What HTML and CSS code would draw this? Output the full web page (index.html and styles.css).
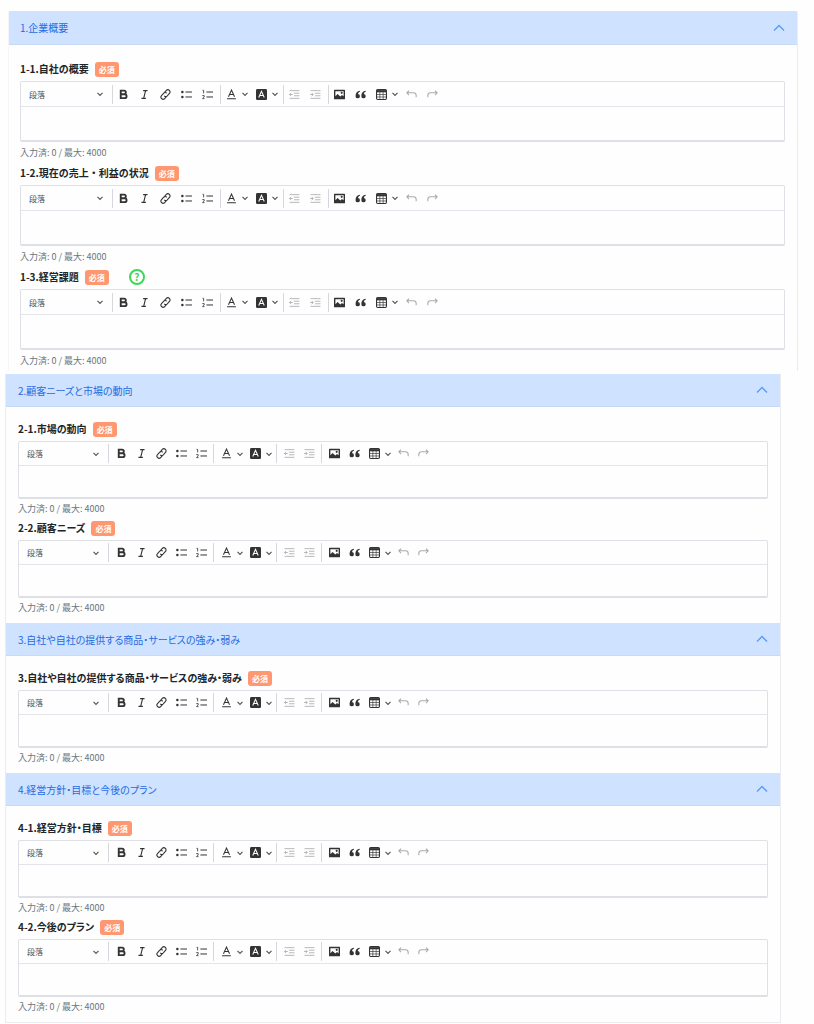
FILE: index.html
```html
<!DOCTYPE html>
<html lang="ja">
<head>
  <meta charset="UTF-8">
  <meta name="viewport" content="width=device-width, initial-scale=1.0">
  <title>事業計画</title>
  <link rel="stylesheet" href="styles.css">
</head>
<body>
  <svg class="sprite" aria-hidden="true">
    <symbol id="i-up" viewBox="0 0 12 12"><path d="M1 8.500l5-5 5 5" fill="none" stroke="currentColor" stroke-width="1.400"/></symbol>
    <symbol id="i-down" viewBox="0 0 6 6"><path d="M.5 1.800L3 4.300l2.500-2.500" fill="none" stroke="currentColor" stroke-width="1.200"/></symbol>
    <symbol id="i-bold" viewBox="0 0 20 20"><path d="M5 3h6a3.200 3.200 0 0 1 0 6.500H5zM5 9.500h7a3.600 3.600 0 0 1 0 7.200H5z" fill="none" stroke="currentColor" stroke-width="3.400"/></symbol>
    <symbol id="i-italic" viewBox="0 0 20 20"><path d="M7.500 3h8M4.500 17h8M12 3L8.500 17" fill="none" stroke="currentColor" stroke-width="2"/></symbol>
    <symbol id="i-link" viewBox="0 0 20 20"><path d="M8 6.500l3.500-3.800a3.900 3.900 0 0 1 5.700 5.400l-4 4.200a3.900 3.900 0 0 1-5.500 0M12 13.500l-3.500 3.800a3.900 3.900 0 0 1-5.700-5.400l4-4.200a3.900 3.900 0 0 1 5.500 0" fill="none" stroke="currentColor" stroke-width="2"/></symbol>
    <symbol id="i-ul" viewBox="0 0 20 20"><path d="M8 5.500h12M8 14.500h12" stroke="currentColor" stroke-width="1.800"/><circle cx="2.500" cy="5.500" r="2.300" fill="currentColor"/><circle cx="2.500" cy="14.500" r="2.300" fill="currentColor"/></symbol>
    <symbol id="i-ol" viewBox="0 0 20 20"><path d="M8 5.500h12M8 14.500h12" stroke="currentColor" stroke-width="1.800"/><path d="M1 2.500h2V8M.5 12H4v2.500L1 17.500h3.500" fill="none" stroke="currentColor" stroke-width="1.500"/></symbol>
    <symbol id="i-color" viewBox="0 0 20 20"><path d="M4.500 14L10 2l5.500 12M6.500 10h7M2 17.800h16" fill="none" stroke="currentColor" stroke-width="1.900"/></symbol>
    <symbol id="i-bg" viewBox="0 0 20 20"><rect width="20" height="20" rx="2.500" fill="currentColor"/><path d="M5 15.500L10 4l5 11.500M7 12h6" fill="none" stroke="#fff" stroke-width="1.900"/></symbol>
    <symbol id="i-outdent" viewBox="0 0 20 20"><path d="M1 3h18M9 7.700h10M9 12.300h10M1 17h18M1 10h6M4 7l-3 3 3 3" fill="none" stroke="currentColor" stroke-width="1.500"/></symbol>
    <symbol id="i-indent" viewBox="0 0 20 20"><path d="M1 3h18M9 7.700h10M9 12.300h10M1 17h18M0 10h6M3 7l3 3-3 3" fill="none" stroke="currentColor" stroke-width="1.500"/></symbol>
    <symbol id="i-image" viewBox="0 0 20 20"><path fill-rule="evenodd" d="M1 1.500h18a1 1 0 0 1 1 1v15a1 1 0 0 1-1 1H1a1 1 0 0 1-1-1v-15a1 1 0 0 1 1-1zM2.500 4v9l4-4 5 4.500 3-2.500 3 2V4z" fill="currentColor"/><circle cx="14" cy="7" r="1.900" fill="currentColor"/></symbol>
    <symbol id="i-quote" viewBox="0 0 20 20"><path d="M9 3C4 3.500 1 7 1 12.500A4 4 0 1 0 5.500 9C5.800 7 7 5.700 9 5zM19.500 3c-5 .5-8 4-8 9.500A4 4 0 1 0 16 9c.3-2 1.500-3.300 3.500-4z" fill="currentColor"/></symbol>
    <symbol id="i-table" viewBox="0 0 20 20"><rect x="1" y="1" width="18" height="18" rx="2" fill="none" stroke="currentColor" stroke-width="2"/><path d="M1 4h18" stroke="currentColor" stroke-width="4"/><path d="M7 5v14M13 5v14M1 10h18M1 14.500h18" stroke="currentColor" stroke-width="1.200"/></symbol>
    <symbol id="i-undo" viewBox="0 0 20 20"><path d="M5.500 3L1.500 7l4 4M1.500 7h12a5 5 0 0 1 5 5v3" fill="none" stroke="currentColor" stroke-width="1.900"/></symbol>
    <symbol id="i-redo" viewBox="0 0 20 20"><path d="M14.500 3l4 4-4 4M18.500 7h-12a5 5 0 0 0-5 5v3" fill="none" stroke="currentColor" stroke-width="1.900"/></symbol>
  </svg>

  <template id="toolbar">
    <div class="toolbar" role="toolbar">
      <span class="style-picker">
        <select class="style-select" aria-label="スタイル"><option>段落</option></select>
        <svg class="caret"><use href="#i-down"/></svg>
      </span>
      <span class="sep"></span>
      <button type="button" class="tool" aria-label="太字"><svg class="icon"><use href="#i-bold"/></svg></button>
      <button type="button" class="tool" aria-label="斜体"><svg class="icon"><use href="#i-italic"/></svg></button>
      <button type="button" class="tool" aria-label="リンク"><svg class="icon"><use href="#i-link"/></svg></button>
      <button type="button" class="tool" aria-label="箇条書き"><svg class="icon"><use href="#i-ul"/></svg></button>
      <button type="button" class="tool" aria-label="番号付きリスト"><svg class="icon"><use href="#i-ol"/></svg></button>
      <span class="sep"></span>
      <button type="button" class="tool drop" aria-label="文字色"><svg class="icon"><use href="#i-color"/></svg><svg class="caret"><use href="#i-down"/></svg></button>
      <button type="button" class="tool drop" aria-label="背景色"><svg class="icon"><use href="#i-bg"/></svg><svg class="caret"><use href="#i-down"/></svg></button>
      <span class="sep"></span>
      <button type="button" class="tool" aria-label="インデント解除" disabled><svg class="icon"><use href="#i-outdent"/></svg></button>
      <button type="button" class="tool" aria-label="インデント" disabled><svg class="icon"><use href="#i-indent"/></svg></button>
      <span class="sep"></span>
      <button type="button" class="tool" aria-label="画像"><svg class="icon"><use href="#i-image"/></svg></button>
      <button type="button" class="tool" aria-label="引用"><svg class="icon"><use href="#i-quote"/></svg></button>
      <button type="button" class="tool drop" aria-label="表"><svg class="icon"><use href="#i-table"/></svg><svg class="caret"><use href="#i-down"/></svg></button>
      <button type="button" class="tool" aria-label="元に戻す" disabled><svg class="icon"><use href="#i-undo"/></svg></button>
      <button type="button" class="tool" aria-label="やり直し" disabled><svg class="icon"><use href="#i-redo"/></svg></button>
    </div>
  </template>

  <form class="plan">
    <div class="accordion">
      <section class="section">
        <h2 class="heading"><button type="button" class="toggle">1.企業概要<svg class="arrow"><use href="#i-up"/></svg></button></h2>
        <div class="body">
          <div class="field">
            <div class="caption"><label for="f11">1-1.自社の概要</label><span class="badge">必須</span></div>
            <div class="editor"><textarea id="f11" class="area"></textarea></div>
            <p class="count">入力済: <span class="num">0</span> / 最大: 4000</p>
          </div>
          <div class="field">
            <div class="caption"><label for="f12">1-2.現在の売上・利益の状況</label><span class="badge">必須</span></div>
            <div class="editor"><textarea id="f12" class="area"></textarea></div>
            <p class="count">入力済: <span class="num">0</span> / 最大: 4000</p>
          </div>
          <div class="field">
            <div class="caption"><label for="f13">1-3.経営課題</label><span class="badge">必須</span><button type="button" class="help">?</button></div>
            <div class="editor"><textarea id="f13" class="area"></textarea></div>
            <p class="count">入力済: <span class="num">0</span> / 最大: 4000</p>
          </div>
        </div>
      </section>
    </div>

    <div class="accordion compact">
      <section class="section">
        <h2 class="heading"><button type="button" class="toggle">2.顧客ニーズと市場の動向<svg class="arrow"><use href="#i-up"/></svg></button></h2>
        <div class="body">
          <div class="field">
            <div class="caption"><label for="f21">2-1.市場の動向</label><span class="badge">必須</span></div>
            <div class="editor"><textarea id="f21" class="area"></textarea></div>
            <p class="count">入力済: <span class="num">0</span> / 最大: 4000</p>
          </div>
          <div class="field">
            <div class="caption"><label for="f22">2-2.顧客ニーズ</label><span class="badge">必須</span></div>
            <div class="editor"><textarea id="f22" class="area"></textarea></div>
            <p class="count">入力済: <span class="num">0</span> / 最大: 4000</p>
          </div>
        </div>
      </section>
      <section class="section">
        <h2 class="heading"><button type="button" class="toggle">3.自社や自社の提供する商品・サービスの強み・弱み<svg class="arrow"><use href="#i-up"/></svg></button></h2>
        <div class="body">
          <div class="field">
            <div class="caption"><label for="f31">3.自社や自社の提供する商品・サービスの強み・弱み</label><span class="badge">必須</span></div>
            <div class="editor"><textarea id="f31" class="area"></textarea></div>
            <p class="count">入力済: <span class="num">0</span> / 最大: 4000</p>
          </div>
        </div>
      </section>
      <section class="section">
        <h2 class="heading"><button type="button" class="toggle">4.経営方針・目標と今後のプラン<svg class="arrow"><use href="#i-up"/></svg></button></h2>
        <div class="body">
          <div class="field">
            <div class="caption"><label for="f41">4-1.経営方針・目標</label><span class="badge">必須</span></div>
            <div class="editor"><textarea id="f41" class="area"></textarea></div>
            <p class="count">入力済: <span class="num">0</span> / 最大: 4000</p>
          </div>
          <div class="field">
            <div class="caption"><label for="f42">4-2.今後のプラン</label><span class="badge">必須</span></div>
            <div class="editor"><textarea id="f42" class="area"></textarea></div>
            <p class="count">入力済: <span class="num">0</span> / 最大: 4000</p>
          </div>
        </div>
      </section>
    </div>
  </form>

  <script>
    const toolbar = document.getElementById('toolbar');

    document.querySelectorAll('.field').forEach(field => {
      const area = field.querySelector('.area');
      field.querySelector('.editor').prepend(toolbar.content.cloneNode(true));
      area.addEventListener('input', () => {
        field.querySelector('.num').textContent = area.value.length;
      });
    });

    document.querySelectorAll('.toggle').forEach(button => {
      button.addEventListener('click', () => {
        button.closest('.section').classList.toggle('closed');
      });
    });
  </script>
</body>
</html>
```
FILE: styles.css
```css
* {
  margin: 0;
  padding: 0;
  box-sizing: border-box;
}

body {
  font-family: "Noto Sans CJK JP", sans-serif;
  font-size: 10px;
  color: #212529;
  background-color: #fefefe;
}

button, select, textarea {
  font: inherit;
  color: inherit;
  background: none;
  border: none;
}

button {
  cursor: pointer;
}

.sprite {
  display: none;
}

.plan {
  display: flex;
  flex-direction: column;
  gap: 3px;
  padding-top: 11px;
}

.accordion {
  --cell: 21px;
  --drop: 30px;
  --picker: 89px;
  --bar: 25px;
  --area: 33px;
  --head: 34px;
  --count: 21px;
  margin: 0 16px 0 8px;
  border-right: 1px solid #ebecf2;
  border-left: 1px solid #f4f5f8;
  border-radius: 3px 3px 0 0;
}

/* narrower column with slightly tighter editors */
.compact {
  --cell: 20px;
  --drop: 29px;
  --picker: 87px;
  --bar: 24px;
  --area: 31px;
  --head: 33px;
  --count: 19px;
  margin: 0 33px 0 5px;
  border: 1px solid #ebecf0;
  border-top: none;
  border-radius: 0;
  font-feature-settings: "palt";
}

.heading {
  font-size: 10px;
  font-weight: 400;
}

.toggle {
  display: flex;
  justify-content: space-between;
  align-items: center;
  width: 100%;
  height: var(--head);
  padding: 0 12px 0 11px;
  color: #256be0;
  background-color: #cfe2ff;
  border-bottom: 1px solid #c6d9f5;
  border-radius: inherit;
}

.compact .toggle {
  padding-left: 12px;
}

.arrow {
  width: 12px;
  height: 12px;
  color: #5a9cf7;
}

.body {
  padding: 14px 12px 0 11px;
}

.compact .body {
  padding: 12px 12px 6px;
}

.closed .body {
  display: none;
}

.caption {
  display: flex;
  align-items: center;
  height: 20px;
  margin-bottom: 2px;
  font-weight: 700;
  line-height: 18px;
}

.badge {
  margin-left: 6px;
  padding: 0 4px;
  font-size: 8px;
  line-height: 15px;
  color: #fff;
  background-color: #ff9770;
  border-radius: 3px;
}

.help {
  width: 16px;
  height: 16px;
  margin-left: 20px;
  font-size: 10px;
  font-weight: 700;
  line-height: 12px;
  color: #3fd65a;
  border: 2px solid #3fd65a;
  border-radius: 50%;
}

.editor {
  border: 1px solid #dfe0e5;
  border-bottom-width: 2px;
  border-radius: 2px;
}

.toolbar {
  display: flex;
  align-items: center;
  height: var(--bar);
  border-bottom: 1px solid #e4e5ea;
}

.style-picker {
  display: grid;
  grid-template-columns: 1fr 13px;
  align-items: center;
  width: var(--picker);
}

.style-select {
  grid-area: 1 / 1 / 2 / 3;
  appearance: none;
  padding-left: 8px;
  font-size: 8px;
  color: #555;
}

.style-picker .caret {
  grid-area: 1 / 2;
  pointer-events: none;
}

.sep {
  width: 1px;
  height: 19px;
  margin-left: 2px;
  background-color: #d5d7dd;
}

.compact .sep {
  margin: 0 2px;
}

.tool {
  display: flex;
  align-items: center;
  justify-content: center;
  width: var(--cell);
  height: 20px;
  color: #333;
}

.tool:disabled {
  color: #aaa;
}

.drop {
  justify-content: flex-start;
  gap: 5px;
  width: var(--drop);
  padding-left: 5px;
}

.icon {
  width: 11px;
  height: 11px;
}

.caret {
  width: 6px;
  height: 6px;
  color: #555;
}

.area {
  display: block;
  width: 100%;
  height: var(--area);
  padding: 4px 8px;
  resize: none;
  outline: none;
}

.count {
  font-size: 9px;
  line-height: var(--count);
  color: #6c757d;
}

@media (max-width: 480px) {
  .accordion {
    margin: 0 5px;
  }

  .toolbar {
    flex-wrap: wrap;
    height: auto;
  }
}
```
